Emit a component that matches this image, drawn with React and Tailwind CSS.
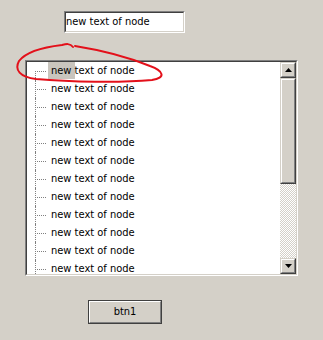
export default function App() {
  const rows = Array.from({ length: 12 });
  return (
    <div className="relative w-[323px] h-[340px] bg-[#d4d0c8] overflow-hidden text-black text-[11px] font-['DejaVu_Sans_Condensed','DejaVu_Sans',sans-serif] font-stretch-condensed">
      <div className="pt-[11px] pl-[64px]">
        <div className="w-[121px] h-[22px] border border-t-[#808080] border-l-[#808080] border-b-white border-r-white">
          <div className="h-full border border-t-[#404040] border-l-[#404040] border-b-[#d4d0c8] border-r-[#d4d0c8] bg-white leading-[18px] pl-[0px]">
            new text of node
          </div>
        </div>
      </div>

      <div className="mt-[27px] ml-[25px] w-[273px] h-[216px] border border-t-[#808080] border-l-[#808080] border-b-white border-r-white">
        <div className="h-full flex border border-t-[#404040] border-l-[#404040] border-b-[#d4d0c8] border-r-[#d4d0c8]">
          <div className="flex-1 bg-white overflow-hidden">
            {rows.map((_, i) => (
              <div key={i} className="relative h-[18px] flex items-center pl-[21px] leading-[18px] whitespace-nowrap">
                <div
                  className={
                    i === 0
                      ? "absolute left-[8px] top-[9px] bottom-0 border-l border-dotted border-[#808080]"
                      : "absolute left-[8px] top-0 bottom-0 border-l border-dotted border-[#808080]"
                  }
                />
                <div className="absolute left-[10px] top-[9px] w-[9px] border-t border-dotted border-[#808080]" />
                {i === 0 ? (
                  <span>
                    <span className="bg-[#c9c5be] pl-[3px] pr-[4px] mr-[-4px] py-[2px]">new</span> text of node
                  </span>
                ) : (
                  <span className="pl-[3px]">new text of node</span>
                )}
              </div>
            ))}
          </div>
          <div className="w-[16px] flex flex-col">
            <div className="h-[16px] border border-t-[#d4d0c8] border-l-[#d4d0c8] border-b-[#404040] border-r-[#404040]">
              <div className="h-full flex items-center justify-center bg-[#d4d0c8] border border-t-white border-l-white border-b-[#808080] border-r-[#808080]">
                <svg width="7" height="4" viewBox="0 0 7 4"><path d="M3.5 0 L7 4 L0 4 Z" fill="#000" /></svg>
              </div>
            </div>
            <div className="h-[106px] border border-t-[#d4d0c8] border-l-[#d4d0c8] border-b-[#404040] border-r-[#404040]">
              <div className="h-full bg-[#d4d0c8] border border-t-white border-l-white border-b-[#808080] border-r-[#808080]" />
            </div>
            <div className="flex-1 bg-[repeating-conic-gradient(#d4d0c8_0_25%,#ffffff_0_50%)] bg-[length:2px_2px]" />
            <div className="h-[16px] border border-t-[#d4d0c8] border-l-[#d4d0c8] border-b-[#404040] border-r-[#404040]">
              <div className="h-full flex items-center justify-center bg-[#d4d0c8] border border-t-white border-l-white border-b-[#808080] border-r-[#808080]">
                <svg width="7" height="4" viewBox="0 0 7 4"><path d="M0 0 L7 0 L3.5 4 Z" fill="#000" /></svg>
              </div>
            </div>
          </div>
        </div>
      </div>

      <div className="mt-[24px] ml-[88px] w-[74px] h-[24px] border border-[#404040]">
        <div className="h-full flex items-center justify-center border border-t-white border-l-white border-b-[#808080] border-r-[#808080]">
          btn1
        </div>
      </div>

      <svg className="absolute left-0 top-0 pointer-events-none" width="323" height="340" viewBox="0 0 323 340">
        <path
          d="M73 47 C70 43 66 44 62 45 C45 47 26 52 19 61 C14 70 20 77 36 79 C70 82 120 83 152 80 C166 78 164 71 150 66 C128 57 100 50 75 46"
          fill="none"
          stroke="#e3101a"
          strokeWidth="2"
          strokeLinecap="round"
        />
      </svg>
    </div>
  );
}
